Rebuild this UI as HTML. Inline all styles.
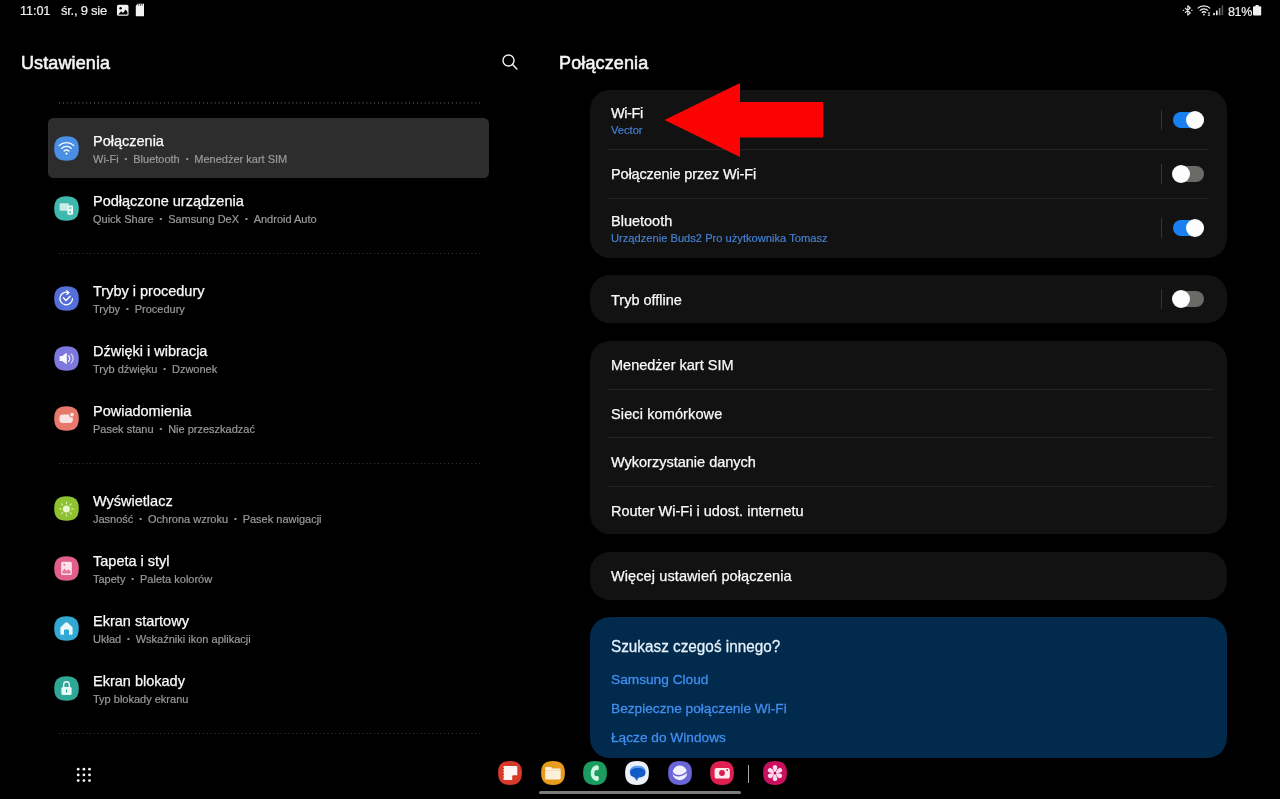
<!DOCTYPE html>
<html lang="pl">
<head>
<meta charset="utf-8">
<title>Ustawienia - Połączenia</title>
<style>
*{box-sizing:border-box;margin:0;padding:0}
html,body{width:1280px;height:799px;background:#000;overflow:hidden}
body{position:relative;font-family:"Liberation Sans",sans-serif;color:#fafafa;-webkit-font-smoothing:antialiased}
.abs{position:absolute;white-space:nowrap}
/* status bar */
.st{position:absolute;top:3px;font-size:13px;line-height:16px;color:#f0f0f0;white-space:nowrap;-webkit-text-stroke:0.2px #f0f0f0}
/* headers */
.h1{position:absolute;top:52px;font-size:18px;line-height:22px;font-weight:normal;color:#f5f5f5;white-space:nowrap;letter-spacing:0.12px;-webkit-text-stroke:0.55px #f5f5f5}
/* left list */
.sel{position:absolute;left:47.8px;top:118.4px;width:441.3px;height:60px;border-radius:5.5px;background:#2d2d2d}
.dots{position:absolute;left:58.8px;width:421.9px;height:1.3px;background-image:linear-gradient(90deg,#3a3a3a 0,#3a3a3a 1.3px,transparent 1.3px);background-size:3.893px 2px}
.item{position:absolute;left:0;width:500px;height:60px}
.item .ic{position:absolute;left:54px;top:17.5px;width:25px;height:25px}
.item .t{position:absolute;left:93px;top:14px;font-size:14.5px;line-height:18px;color:#fafafa;white-space:nowrap;-webkit-text-stroke:0.25px #fafafa}
.item .s{position:absolute;left:93px;top:33.5px;font-size:11px;line-height:14px;color:#9a9a9a;white-space:nowrap;-webkit-text-stroke:0.2px #9a9a9a}
.item .s i{font-style:normal;display:inline-block;width:14.6px;text-align:center;font-size:8px;vertical-align:1.5px}
/* right cards */
.card{position:absolute;left:591px;width:636px}
.cbg{position:absolute;left:590.2px;width:637.2px;background:#121212;border-radius:20px}
.row{position:absolute;left:0;width:636px}
.row .t{position:absolute;left:20px;font-size:14.5px;line-height:18px;color:#fafafa;white-space:nowrap;-webkit-text-stroke:0.25px #fafafa}
.row .s{position:absolute;left:20px;font-size:11.15px;line-height:14px;color:#4583d8;white-space:nowrap;-webkit-text-stroke:0.15px #4583d8}
.div{position:absolute;left:17px;width:600px;height:1px;background:#242424}
.vbar{position:absolute;left:570px;width:1px;height:20px;background:#343434}
.tg{position:absolute;left:582px;width:31px;height:16px;border-radius:8px}
.tg.on{background:#1a80f2}
.tg.off{background:#6b6a66}
.tg b{position:absolute;top:-1px;width:18px;height:18px;border-radius:50%;background:#fdfdfd;display:block}
.tg.on b{left:13.2px}
.tg.off b{left:-0.8px}
.cbg.blue{background:#012a4c}
.blue .q{position:absolute;left:20px;top:20px;font-size:15.3px;line-height:18px;color:#e6f1fb;white-space:nowrap;-webkit-text-stroke:0.25px #e6f1fb;transform:scaleY(1.1);transform-origin:0 14px}
.blue .l{position:absolute;left:20px;font-size:13.7px;line-height:18px;color:#428ef0;white-space:nowrap;-webkit-text-stroke:0.3px #428ef0}
/* dock */
.dk{position:absolute;top:761px;width:24px;height:24px}
</style>
</head>
<body>
<div id="root" style="position:absolute;left:0;top:0;width:1280px;height:799px;will-change:transform">

<!-- STATUS BAR -->
<div class="st" style="left:20px;font-size:12.7px;letter-spacing:-0.1px">11:01</div>
<div class="st" style="left:61px;letter-spacing:-0.25px">śr., 9 sie</div>
<svg class="abs" style="left:116px;top:3px" width="32" height="15" viewBox="0 0 32 15">
  <rect x="1" y="1.8" width="11.5" height="11" rx="1.6" fill="#f2f2f2"/>
  <path d="M2.2 11.6 L5.2 8.2 L7 10 L9.6 6.6 L11.4 9 V11.6 Z" fill="#000"/>
  <circle cx="4.6" cy="5.2" r="1.25" fill="#000"/>
  <path d="M21.6 0.8 H28 V13.2 H19.8 V3 Z" fill="#f2f2f2"/>
  <path d="M22.6 0.8 V2.8 M24.4 0.8 V2.8 M26.2 0.8 V2.8" stroke="#000" stroke-width="0.6"/>
</svg>

<svg class="abs" style="left:1180px;top:3px" width="90" height="16" viewBox="0 0 90 16">
  <!-- bluetooth -->
  <path d="M4.9 4.9 L10.3 9.8 L7.8 12.1 V2.7 L10.3 5 L4.9 9.9" fill="none" stroke="#f0f0f0" stroke-width="1.05" stroke-linejoin="round"/>
  <path d="M3.1 7.35 h1.1 M11.3 7.35 h1.1" stroke="#f0f0f0" stroke-width="1.1"/>
  <!-- wifi -->
  <path d="M17.6 5.4 A9.2 9.2 0 0 1 30.2 5.4" fill="none" stroke="#f0f0f0" stroke-width="1.25"/>
  <path d="M19.7 7.6 A6.1 6.1 0 0 1 28.1 7.6" fill="none" stroke="#f0f0f0" stroke-width="1.25"/>
  <path d="M21.8 9.7 A3.1 3.1 0 0 1 26 9.7" fill="none" stroke="#f0f0f0" stroke-width="1.25"/>
  <circle cx="23.9" cy="11.6" r="0.9" fill="#f0f0f0"/>
  <path d="M27.6 9.6 l1.4 1.6 l1.4 -1.6 z M27.6 12.7 l1.4 -1.6 l1.4 1.6 z" fill="#f0f0f0"/>
  <!-- signal -->
  <rect x="33.2" y="10" width="1.6" height="2.2" fill="#f0f0f0"/>
  <rect x="36" y="7.6" width="1.6" height="4.6" fill="#f0f0f0"/>
  <rect x="38.8" y="5" width="1.6" height="7.2" fill="#8a8a8a"/>
  <rect x="41.6" y="2.4" width="1.6" height="9.8" fill="#555"/>
  <!-- battery -->
  <rect x="75.6" y="2" width="3" height="2" fill="#f0f0f0"/>
  <rect x="73" y="3.2" width="8.2" height="9.4" rx="1" fill="#f0f0f0"/>
</svg>
<div class="st" style="left:1228px;top:3.5px;font-size:12.5px;letter-spacing:-0.35px">81%</div>

<!-- HEADERS -->
<div class="h1" style="left:21px">Ustawienia</div>
<svg class="abs" style="left:500px;top:52.3px" width="20" height="20" viewBox="0 0 20 20">
  <circle cx="8.5" cy="8.5" r="5.5" fill="none" stroke="#f0f0f0" stroke-width="1.4"/>
  <path d="M12.6 12.6 L16.9 17" stroke="#f0f0f0" stroke-width="1.5" stroke-linecap="round"/>
</svg>
<div class="h1" style="left:559px">Połączenia</div>

<!-- LEFT LIST -->
<div class="dots" style="top:102.4px"></div>
<div class="sel"></div>

<div class="item" style="top:118px">
  <svg class="ic" viewBox="0 0 25 25"><path d="M12.5 0.2 C21 0.2 24.8 4 24.8 12.5 C24.8 21 21 24.8 12.5 24.8 C4 24.8 0.2 21 0.2 12.5 C0.2 4 4 0.2 12.5 0.2 Z" fill="#4a8fe4"/>
    <g fill="none" stroke="#fff" stroke-width="1.35" stroke-linecap="round" opacity=".95">
    <path d="M5.2 9.6 A10.6 10.6 0 0 1 19.8 9.6"/>
    <path d="M7.6 12.4 A7.1 7.1 0 0 1 17.4 12.4"/>
    <path d="M10.1 15.1 A3.5 3.5 0 0 1 14.9 15.1"/></g>
    <circle cx="12.5" cy="17.6" r="1.05" fill="#fff"/></svg>
  <div class="t">Połączenia</div>
  <div class="s">Wi-Fi<i>•</i>Bluetooth<i>•</i>Menedżer kart SIM</div>
</div>

<div class="item" style="top:178px">
  <svg class="ic" viewBox="0 0 25 25"><path d="M12.5 0.2 C21 0.2 24.8 4 24.8 12.5 C24.8 21 21 24.8 12.5 24.8 C4 24.8 0.2 21 0.2 12.5 C0.2 4 4 0.2 12.5 0.2 Z" fill="#3fb9ad"/>
    <rect x="5.6" y="7.2" width="9.2" height="7.6" rx="1" fill="#fff" opacity=".72"/>
    <rect x="13.4" y="9.6" width="5.6" height="9.2" rx="1.1" fill="#e9faf8"/>
    <circle cx="16.2" cy="16.2" r="0.9" fill="#3fb9ad"/>
    <rect x="14.8" y="11" width="2.8" height="2.2" rx=".4" fill="#3fb9ad" opacity=".55"/></svg>
  <div class="t">Podłączone urządzenia</div>
  <div class="s">Quick Share<i>•</i>Samsung DeX<i>•</i>Android Auto</div>
</div>

<div class="dots" style="top:252.8px"></div>

<div class="item" style="top:268px">
  <svg class="ic" viewBox="0 0 25 25"><path d="M12.5 0.2 C21 0.2 24.8 4 24.8 12.5 C24.8 21 21 24.8 12.5 24.8 C4 24.8 0.2 21 0.2 12.5 C0.2 4 4 0.2 12.5 0.2 Z" fill="#5470d8"/>
    <path d="M14.6 6.7 A6.3 6.3 0 1 0 18.5 12.6" fill="none" stroke="#fff" stroke-width="1.3" stroke-linecap="round"/>
    <path d="M12.7 4.7 L15 6.6 L12.6 8.4" fill="none" stroke="#fff" stroke-width="1.2" stroke-linecap="round" stroke-linejoin="round"/>
    <path d="M9.4 11.8 L12 14.5 L16.2 10.2" fill="none" stroke="#fff" stroke-width="1.4" stroke-linecap="round" stroke-linejoin="round"/></svg>
  <div class="t">Tryby i procedury</div>
  <div class="s">Tryby<i>•</i>Procedury</div>
</div>

<div class="item" style="top:328px">
  <svg class="ic" viewBox="0 0 25 25"><path d="M12.5 0.2 C21 0.2 24.8 4 24.8 12.5 C24.8 21 21 24.8 12.5 24.8 C4 24.8 0.2 21 0.2 12.5 C0.2 4 4 0.2 12.5 0.2 Z" fill="#7c78de"/>
    <path d="M5.6 10.6 a.6 .6 0 0 1 .6 -.6 H8.2 L12.2 7 a.4 .4 0 0 1 .6 .3 V17.7 a.4 .4 0 0 1 -.6 .3 L8.2 15 H6.2 a.6 .6 0 0 1 -.6 -.6 Z" fill="#fff" opacity=".95"/>
    <path d="M14.6 9.8 A3.6 3.6 0 0 1 14.6 15.2" fill="none" stroke="#fff" stroke-width="1.3" stroke-linecap="round" opacity=".9"/>
    <path d="M17.2 8 A6.2 6.2 0 0 1 17.2 17" fill="none" stroke="#fff" stroke-width="1.3" stroke-linecap="round" opacity=".65"/></svg>
  <div class="t">Dźwięki i wibracja</div>
  <div class="s">Tryb dźwięku<i>•</i>Dzwonek</div>
</div>

<div class="item" style="top:388px">
  <svg class="ic" viewBox="0 0 25 25"><path d="M12.5 0.2 C21 0.2 24.8 4 24.8 12.5 C24.8 21 21 24.8 12.5 24.8 C4 24.8 0.2 21 0.2 12.5 C0.2 4 4 0.2 12.5 0.2 Z" fill="#e8776c"/>
    <rect x="5.4" y="8.6" width="13.4" height="8.4" rx="3.2" fill="#fbeeee" opacity=".92"/>
    <circle cx="18" cy="8.6" r="3" fill="#e8776c"/>
    <circle cx="18" cy="8.6" r="1.9" fill="#fde3d6"/></svg>
  <div class="t">Powiadomienia</div>
  <div class="s">Pasek stanu<i>•</i>Nie przeszkadzać</div>
</div>

<div class="dots" style="top:462.8px"></div>

<div class="item" style="top:478px">
  <svg class="ic" viewBox="0 0 25 25"><path d="M12.5 0.2 C21 0.2 24.8 4 24.8 12.5 C24.8 21 21 24.8 12.5 24.8 C4 24.8 0.2 21 0.2 12.5 C0.2 4 4 0.2 12.5 0.2 Z" fill="#8fc232"/>
    <circle cx="12.4" cy="12.9" r="3.5" fill="#e9f7d0"/>
    <g stroke="#dff3b8" stroke-width="1.2" stroke-linecap="round" opacity=".85">
      <path d="M12.4 6v1.6M12.4 18.2v1.6M5.5 12.9h1.6M17.7 12.9h1.6M7.5 8l1.1 1.1M16.2 16.7l1.1 1.1M7.5 17.8l1.1-1.1M16.2 9.1l1.1-1.1"/></g></svg>
  <div class="t">Wyświetlacz</div>
  <div class="s">Jasność<i>•</i>Ochrona wzroku<i>•</i>Pasek nawigacji</div>
</div>

<div class="item" style="top:538px">
  <svg class="ic" viewBox="0 0 25 25"><path d="M12.5 0.2 C21 0.2 24.8 4 24.8 12.5 C24.8 21 21 24.8 12.5 24.8 C4 24.8 0.2 21 0.2 12.5 C0.2 4 4 0.2 12.5 0.2 Z" fill="#e1608b"/>
    <rect x="7.2" y="5.8" width="10.6" height="13.2" rx="1.6" fill="#fdeaf0" opacity=".95"/>
    <path d="M8.4 17.6 V15 L10.6 12.6 L12.6 15 L14.6 13.2 L16.6 15.4 V17.6 Z" fill="#e1608b" opacity=".85"/>
    <circle cx="10.4" cy="8.8" r="1" fill="#e1608b" opacity=".85"/></svg>
  <div class="t">Tapeta i styl</div>
  <div class="s">Tapety<i>•</i>Paleta kolorów</div>
</div>

<div class="item" style="top:598px">
  <svg class="ic" viewBox="0 0 25 25"><path d="M12.5 0.2 C21 0.2 24.8 4 24.8 12.5 C24.8 21 21 24.8 12.5 24.8 C4 24.8 0.2 21 0.2 12.5 C0.2 4 4 0.2 12.5 0.2 Z" fill="#31a9d3"/>
    <path d="M6.4 12.2 a1.4 1.4 0 0 1 .5 -1.1 L11.5 6.6 a1.5 1.5 0 0 1 2 0 L18.1 11.1 a1.4 1.4 0 0 1 .5 1.1 V17.6 a1.2 1.2 0 0 1 -1.2 1.2 H15 V14.6 a1 1 0 0 0 -1 -1 H11 a1 1 0 0 0 -1 1 V18.8 H7.6 a1.2 1.2 0 0 1 -1.2 -1.2 Z" fill="#eaf7fc"/></svg>
  <div class="t">Ekran startowy</div>
  <div class="s">Układ<i>•</i>Wskaźniki ikon aplikacji</div>
</div>

<div class="item" style="top:658px">
  <svg class="ic" viewBox="0 0 25 25"><path d="M12.5 0.2 C21 0.2 24.8 4 24.8 12.5 C24.8 21 21 24.8 12.5 24.8 C4 24.8 0.2 21 0.2 12.5 C0.2 4 4 0.2 12.5 0.2 Z" fill="#30a898"/>
    <path d="M9.7 11.4 V8.5 a2.8 2.8 0 0 1 5.6 0 V11.4" fill="none" stroke="#e9f8f5" stroke-width="1.35"/>
    <rect x="7.4" y="10.9" width="10.2" height="8.2" rx="1.5" fill="#e9f8f5"/>
    <rect x="12" y="13.4" width="1.1" height="3" rx=".4" fill="#30a898"/></svg>
  <div class="t">Ekran blokady</div>
  <div class="s">Typ blokady ekranu</div>
</div>

<div class="dots" style="top:732.5px"></div>

<!-- app drawer grid -->
<svg class="abs" style="left:75px;top:766px" width="18" height="18" viewBox="0 0 18 18">
  <g fill="#f5f5f5">
    <circle cx="3.2" cy="3.2" r="1.4"/><circle cx="8.9" cy="3.2" r="1.4"/><circle cx="14.5" cy="3.2" r="1.4"/>
    <circle cx="3.2" cy="8.9" r="1.4"/><circle cx="8.9" cy="8.9" r="1.4"/><circle cx="14.5" cy="8.9" r="1.4"/>
    <circle cx="3.2" cy="14.6" r="1.4"/><circle cx="8.9" cy="14.6" r="1.4"/><circle cx="14.5" cy="14.6" r="1.4"/>
  </g>
</svg>

<!-- RIGHT CARDS -->
<div class="cbg" style="top:90.3px;height:167.6px"></div>
<div class="card" style="top:91px;height:166px">
  <div class="row" style="top:0;height:58px">
    <div class="t" style="top:13px;letter-spacing:-0.4px">Wi-Fi</div>
    <div class="s" style="top:32px">Vector</div>
    <div class="vbar" style="top:19px"></div>
    <div class="tg on" style="top:21px"><b></b></div>
  </div>
  <div class="div" style="top:58px"></div>
  <div class="row" style="top:59px;height:48px">
    <div class="t" style="top:15px;letter-spacing:-0.15px">Połączenie przez Wi-Fi</div>
    <div class="vbar" style="top:14px"></div>
    <div class="tg off" style="top:16px"><b></b></div>
  </div>
  <div class="div" style="top:107px"></div>
  <div class="row" style="top:108px;height:58px">
    <div class="t" style="top:13px">Bluetooth</div>
    <div class="s" style="top:32px">Urządzenie Buds2 Pro użytkownika Tomasz</div>
    <div class="vbar" style="top:19px"></div>
    <div class="tg on" style="top:21px"><b></b></div>
  </div>
</div>

<div class="cbg" style="top:275px;height:47.9px"></div>
<div class="card" style="top:276px;height:46px">
  <div class="row" style="top:0;height:46px">
    <div class="t" style="top:15px">Tryb offline</div>
    <div class="vbar" style="top:13px"></div>
    <div class="tg off" style="top:15px"><b></b></div>
  </div>
</div>

<div class="cbg" style="top:340.5px;height:193.8px"></div>
<div class="card" style="top:341px;height:193px">
  <div class="row" style="top:0"><div class="t" style="top:15px">Menedżer kart SIM</div></div>
  <div class="div" style="top:48px;width:604.5px"></div>
  <div class="row" style="top:48px"><div class="t" style="top:16px;letter-spacing:0.12px">Sieci komórkowe</div></div>
  <div class="div" style="top:96px;width:604.5px"></div>
  <div class="row" style="top:97px"><div class="t" style="top:15px">Wykorzystanie danych</div></div>
  <div class="div" style="top:145px;width:604.5px"></div>
  <div class="row" style="top:145px"><div class="t" style="top:16px">Router Wi-Fi i udost. internetu</div></div>
</div>

<div class="cbg" style="top:551.5px;height:48px"></div>
<div class="card" style="top:552px;height:47px">
  <div class="row" style="top:0"><div class="t" style="top:15px;letter-spacing:0.1px">Więcej ustawień połączenia</div></div>
</div>

<div class="cbg blue" style="top:616.9px;height:140.8px"></div>
<div class="card blue" style="top:618px;height:139px">
  <div class="q">Szukasz czegoś innego?</div>
  <div class="l" style="top:53px">Samsung Cloud</div>
  <div class="l" style="top:82px">Bezpieczne połączenie Wi-Fi</div>
  <div class="l" style="top:111px">Łącze do Windows</div>
</div>

<!-- RED ARROW -->
<svg class="abs" style="left:660px;top:80px" width="170" height="80" viewBox="0 0 170 80">
  <path d="M4.5 40 L80 3 V22 H163.3 V57.5 H80 V77 Z" fill="#fc0303"/>
</svg>

<!-- DOCK -->
<svg class="dk" style="left:498px" viewBox="0 0 24 24"><path d="M12 0.1 C20.2 0.1 23.9 3.8 23.9 12 C23.9 20.2 20.2 23.9 12 23.9 C3.8 23.9 0.1 20.2 0.1 12 C0.1 3.8 3.8 0.1 12 0.1 Z" fill="#d9392b"/>
  <path d="M6.4 4.9 H18 a1.3 1.3 0 0 1 1.3 1.3 V14.2 H15.4 a1.2 1.2 0 0 0 -1.2 1.2 V19.1 H6.4 a1 1 0 0 1 -1 -1 V5.9 a1 1 0 0 1 1 -1 Z" fill="#fff6f4"/>
  <g fill="#d9392b"><circle cx="5.3" cy="7.6" r=".8"/><circle cx="5.3" cy="10.5" r=".8"/><circle cx="5.3" cy="13.4" r=".8"/><circle cx="5.3" cy="16.3" r=".8"/></g></svg>
<svg class="dk" style="left:540.5px" viewBox="0 0 24 24"><path d="M12 0.1 C20.2 0.1 23.9 3.8 23.9 12 C23.9 20.2 20.2 23.9 12 23.9 C3.8 23.9 0.1 20.2 0.1 12 C0.1 3.8 3.8 0.1 12 0.1 Z" fill="#e99b1e"/>
  <path d="M4.2 7.2 a1.3 1.3 0 0 1 1.3 -1.3 H10 L11.7 7.6 H18.4 a1.3 1.3 0 0 1 1.3 1.3 V17.2 a1.3 1.3 0 0 1 -1.3 1.3 H5.5 a1.3 1.3 0 0 1 -1.3 -1.3 Z" fill="#fdf0da"/>
  <path d="M4.2 9.4 H19.7" stroke="#e99b1e" stroke-width=".5" opacity=".5"/></svg>
<svg class="dk" style="left:583px" viewBox="0 0 24 24"><path d="M12 0.1 C20.2 0.1 23.9 3.8 23.9 12 C23.9 20.2 20.2 23.9 12 23.9 C3.8 23.9 0.1 20.2 0.1 12 C0.1 3.8 3.8 0.1 12 0.1 Z" fill="#1b9d60"/>
  <path d="M13.4 4.3 C14.8 4.1 16 5.2 15.9 6.6 L15.7 8 C15.6 8.9 15 9.3 14.2 9.3 L12.2 9.2 C11 11 11 13.4 12.2 15.1 L14.2 15 C15 15 15.6 15.4 15.7 16.3 L15.9 17.7 C16 19.1 14.8 20.1 13.4 19.9 C6 18.6 6 5.6 13.4 4.3 Z" fill="#cdf7df"/></svg>
<svg class="dk" style="left:625px" viewBox="0 0 24 24"><path d="M12 0.1 C20.2 0.1 23.9 3.8 23.9 12 C23.9 20.2 20.2 23.9 12 23.9 C3.8 23.9 0.1 20.2 0.1 12 C0.1 3.8 3.8 0.1 12 0.1 Z" fill="#edf0f7"/>
  <path d="M4.8 10.4 C4.8 6.6 8 4.7 12.7 4.7 C17.4 4.7 20.5 6.6 20.5 10.4 V11.6 H4.8 Z" fill="#5a9cf0"/>
  <path d="M11.9 20 L8.6 15.4 L14 15.8 Z" fill="#2d66d0"/>
  <path d="M5 11.7 C5 8.6 7.6 6.9 12.7 6.9 C17.8 6.9 20.5 8.6 20.5 11.7 C20.5 14.8 17.8 16.5 12.7 16.5 C7.6 16.5 5 14.8 5 11.7 Z" fill="#115ac8"/></svg>
<svg class="dk" style="left:668px" viewBox="0 0 24 24"><path d="M12 0.1 C20.2 0.1 23.9 3.8 23.9 12 C23.9 20.2 20.2 23.9 12 23.9 C3.8 23.9 0.1 20.2 0.1 12 C0.1 3.8 3.8 0.1 12 0.1 Z" fill="#6a66d8"/>
  <circle cx="11.8" cy="11.9" r="7.3" fill="#f0f1ff"/>
  <path d="M4 10.6 C7 16.4 14.4 16 19.8 10" fill="none" stroke="#6a66d8" stroke-width="1.5"/></svg>
<svg class="dk" style="left:710px" viewBox="0 0 24 24"><path d="M12 0.1 C20.2 0.1 23.9 3.8 23.9 12 C23.9 20.2 20.2 23.9 12 23.9 C3.8 23.9 0.1 20.2 0.1 12 C0.1 3.8 3.8 0.1 12 0.1 Z" fill="#df1f50"/>
  <rect x="4.6" y="6.9" width="15.2" height="10.7" rx="2.2" fill="#ffeaf0"/>
  <circle cx="12" cy="12" r="2.9" fill="#d81c4c"/>
  <circle cx="17.2" cy="9" r=".9" fill="#d81c4c"/></svg>
<div class="abs" style="left:748px;top:764.5px;width:1.2px;height:18px;background:#a8a8a8"></div>
<svg class="dk" style="left:763px" viewBox="0 0 24 24"><path d="M12 0.1 C20.2 0.1 23.9 3.8 23.9 12 C23.9 20.2 20.2 23.9 12 23.9 C3.8 23.9 0.1 20.2 0.1 12 C0.1 3.8 3.8 0.1 12 0.1 Z" fill="#c9105f"/><g fill="#ffdcee"><path d="M12 11.4 C10 9 9.4 6.6 9.9 5.5 C10.5 3.8 13.5 3.8 14.1 5.5 C14.6 6.6 14 9 12 11.4 Z" transform="rotate(0 12 12.1)"/><path d="M12 11.4 C10 9 9.4 6.6 9.9 5.5 C10.5 3.8 13.5 3.8 14.1 5.5 C14.6 6.6 14 9 12 11.4 Z" transform="rotate(60 12 12.1)"/><path d="M12 11.4 C10 9 9.4 6.6 9.9 5.5 C10.5 3.8 13.5 3.8 14.1 5.5 C14.6 6.6 14 9 12 11.4 Z" transform="rotate(120 12 12.1)"/><path d="M12 11.4 C10 9 9.4 6.6 9.9 5.5 C10.5 3.8 13.5 3.8 14.1 5.5 C14.6 6.6 14 9 12 11.4 Z" transform="rotate(180 12 12.1)"/><path d="M12 11.4 C10 9 9.4 6.6 9.9 5.5 C10.5 3.8 13.5 3.8 14.1 5.5 C14.6 6.6 14 9 12 11.4 Z" transform="rotate(240 12 12.1)"/><path d="M12 11.4 C10 9 9.4 6.6 9.9 5.5 C10.5 3.8 13.5 3.8 14.1 5.5 C14.6 6.6 14 9 12 11.4 Z" transform="rotate(300 12 12.1)"/></g><circle cx="12" cy="12.1" r="1.2" fill="#a00c4c"/></svg>

<!-- nav handle -->
<div class="abs" style="left:539px;top:791px;width:202px;height:3px;border-radius:2px;background:#7c7c7c"></div>

</div>
</body>
</html>
